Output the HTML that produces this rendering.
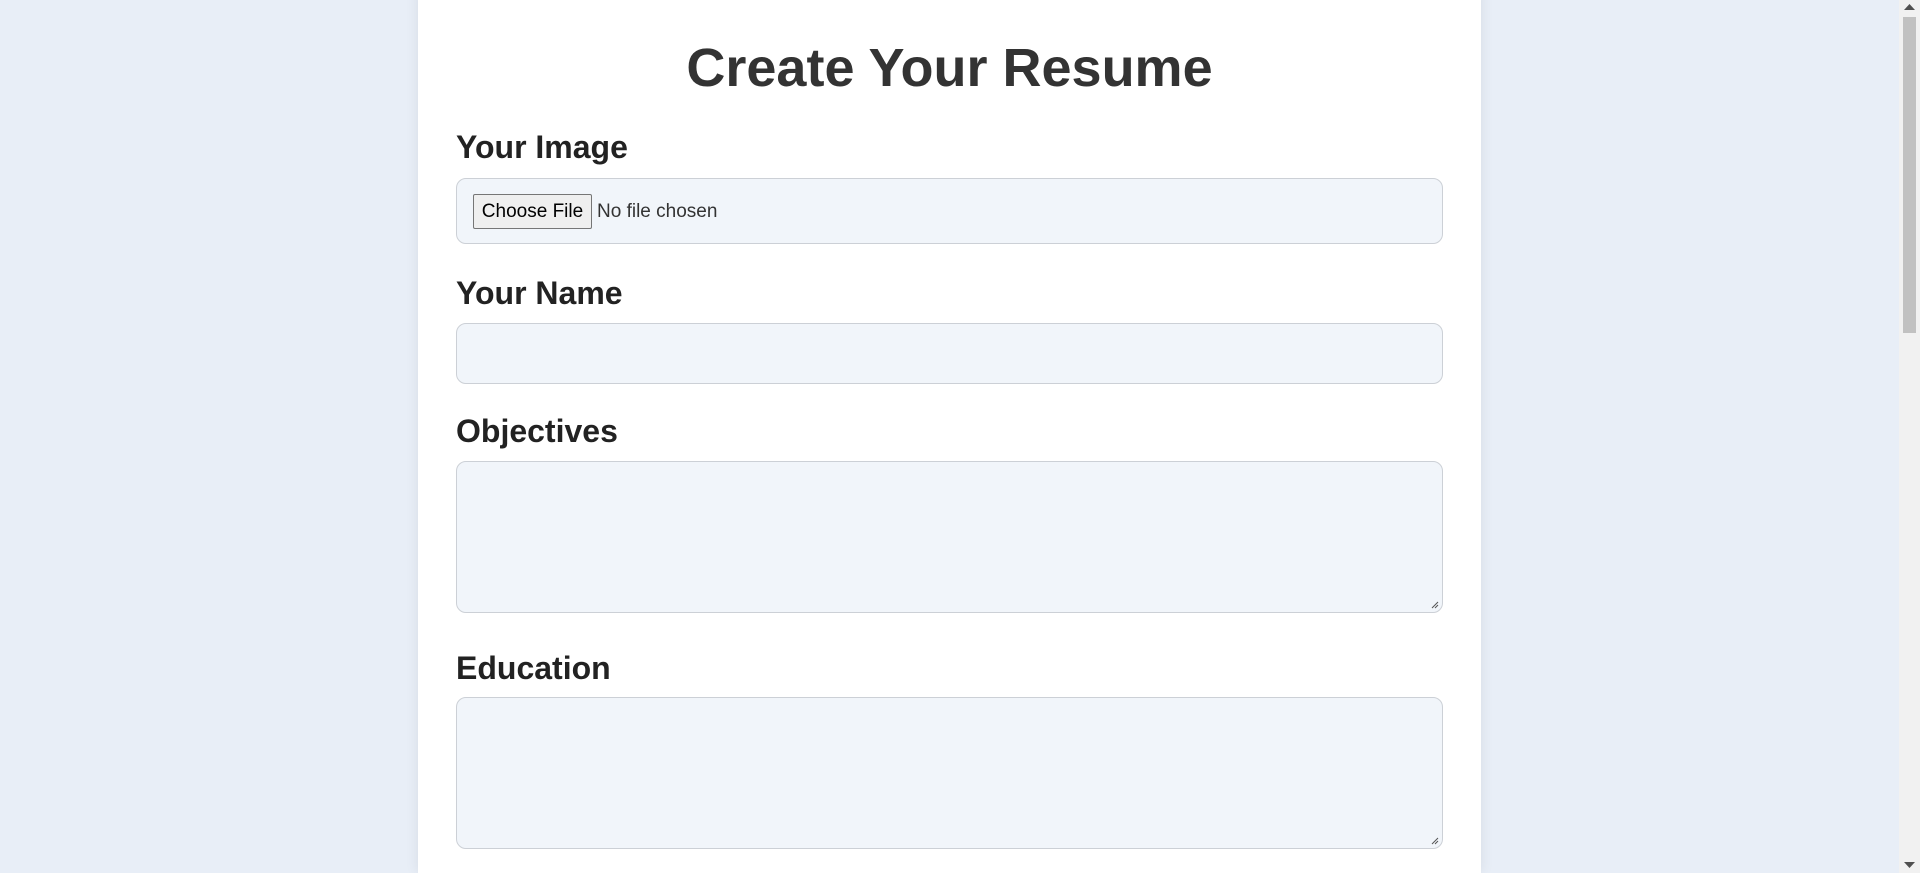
<!DOCTYPE html>
<html><head><meta charset="utf-8"><style>
html,body{margin:0;padding:0;width:1920px;height:873px;overflow:hidden;background:#e8eef7;font-family:"Liberation Sans",sans-serif;}
.card{position:absolute;left:418px;top:-20px;width:1063px;height:893px;background:#fff;border-radius:16px 16px 0 0;box-shadow:0 0 14px rgba(0,0,0,0.08);}
.t{position:absolute;left:418px;width:1063px;text-align:center;top:37px;font-size:54px;font-weight:bold;color:#333;}
.l{position:absolute;left:456px;font-size:32px;font-weight:bold;color:#222;}
.box{position:absolute;left:456px;width:987px;background:#f1f5fa;border:1px solid #ccd0d6;border-radius:10px;box-sizing:border-box;}
.btn{position:absolute;left:16px;top:15px;width:119px;height:35px;box-sizing:border-box;border:1px solid #767676;border-radius:2px;background:#efefef;font-size:19px;line-height:33px;text-align:center;color:#000;}
.nf{position:absolute;left:140px;top:15px;line-height:35px;font-size:19px;color:#333;}
.rz{position:absolute;right:3px;bottom:3px;width:8px;height:8px;}
.sb{position:absolute;right:0;top:0;width:21px;height:873px;background:#f1f1f1;}
.th{position:absolute;left:4px;top:17px;width:13px;height:316px;background:#c1c1c1;}
</style></head><body>
<div class="card"></div>
<div class="t">Create Your Resume</div>
<div class="l" style="top:129px">Your Image</div>
<div class="box" style="top:178px;height:66px"><div class="btn">Choose File</div><div class="nf">No file chosen</div></div>
<div class="l" style="top:275px">Your Name</div>
<div class="box" style="top:323px;height:61px"></div>
<div class="l" style="top:413px">Objectives</div>
<div class="box" style="top:461px;height:152px"><svg class="rz" viewBox="0 0 8 8"><path d="M1 7L7 1M4 7L7 4" stroke="#555" stroke-width="1"/></svg></div>
<div class="l" style="top:650px">Education</div>
<div class="box" style="top:697px;height:152px"><svg class="rz" viewBox="0 0 8 8"><path d="M1 7L7 1M4 7L7 4" stroke="#555" stroke-width="1"/></svg></div>
<div class="sb"><div class="th"></div>
<svg style="position:absolute;left:5px;top:4px" width="11" height="6"><path d="M0 6L5.5 0L11 6Z" fill="#505050"/></svg>
<svg style="position:absolute;left:5px;top:862px" width="11" height="6"><path d="M0 0L5.5 6L11 0Z" fill="#505050"/></svg>
</div>
</body></html>
